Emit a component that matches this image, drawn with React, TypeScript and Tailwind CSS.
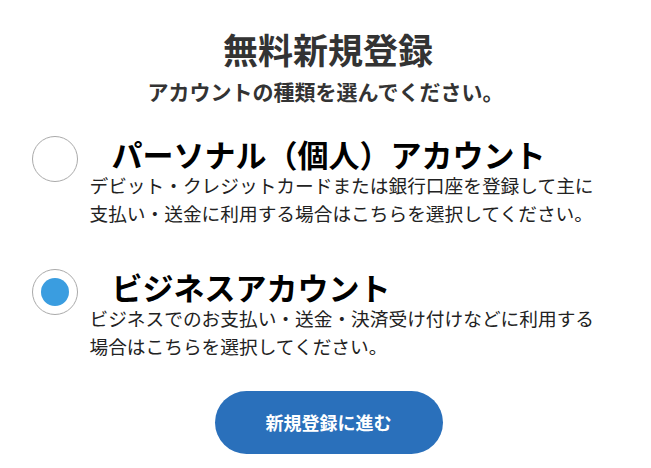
import React, { useState } from 'react';

const font = { fontFamily: '"Noto Sans CJK JP", "Noto Sans", sans-serif' };

type Kind = 'personal' | 'business';

const options: { key: Kind; title: string; lines: string[] }[] = [
  {
    key: 'personal',
    title: 'パーソナル（個人）アカウント',
    lines: ['デビット・クレジットカードまたは銀行口座を登録して主に', '支払い・送金に利用する場合はこちらを選択してください。'],
  },
  {
    key: 'business',
    title: 'ビジネスアカウント',
    lines: ['ビジネスでのお支払い・送金・決済受け付けなどに利用する', '場合はこちらを選択してください。'],
  },
];

export default function App() {
  const [kind, setKind] = useState<Kind>('business');

  return (
    <div className="w-[651px] h-[468px] bg-white overflow-hidden flex flex-col items-center" style={font}>
      {/* Header */}
      <h1 className="mt-[29px] text-[35px] leading-[40px] font-bold text-[#333] pl-[5px]">無料新規登録</h1>
      <p className="mt-[8px] text-[21px] leading-[28px] font-bold text-[#333]">アカウントの種類を選んでください。</p>

      {/* Account type options */}
      <div className="w-[588px] mt-[32px] flex flex-col gap-[43px]">
        {options.map((opt) => (
          <label key={opt.key} className="flex items-start gap-[12px] cursor-pointer" onClick={() => setKind(opt.key)}>
            <span className="w-[46px] h-[46px] shrink-0 rounded-full border border-[#aaaaaa] bg-white flex items-center justify-center mt-[-1px]">
              {kind === opt.key && <span className="w-[28px] h-[28px] rounded-full bg-[#3a9de0]" />}
            </span>
            <div className="flex flex-col">
              <span className="pl-[22px] text-[31px] leading-[33px] font-bold text-black whitespace-nowrap">{opt.title}</span>
              <div className="mt-[1px] flex flex-col">
                {opt.lines.map((l) => (
                  <span key={l} className="text-[18.7px] leading-[28px] text-[#222] whitespace-nowrap">{l}</span>
                ))}
              </div>
            </div>
          </label>
        ))}
      </div>

      {/* Submit */}
      <button className="mt-[31px] w-[228px] h-[63px] rounded-full bg-[#2a70bb] text-white text-[18px] font-bold ml-[6px]">
        新規登録に進む
      </button>
    </div>
  );
}
